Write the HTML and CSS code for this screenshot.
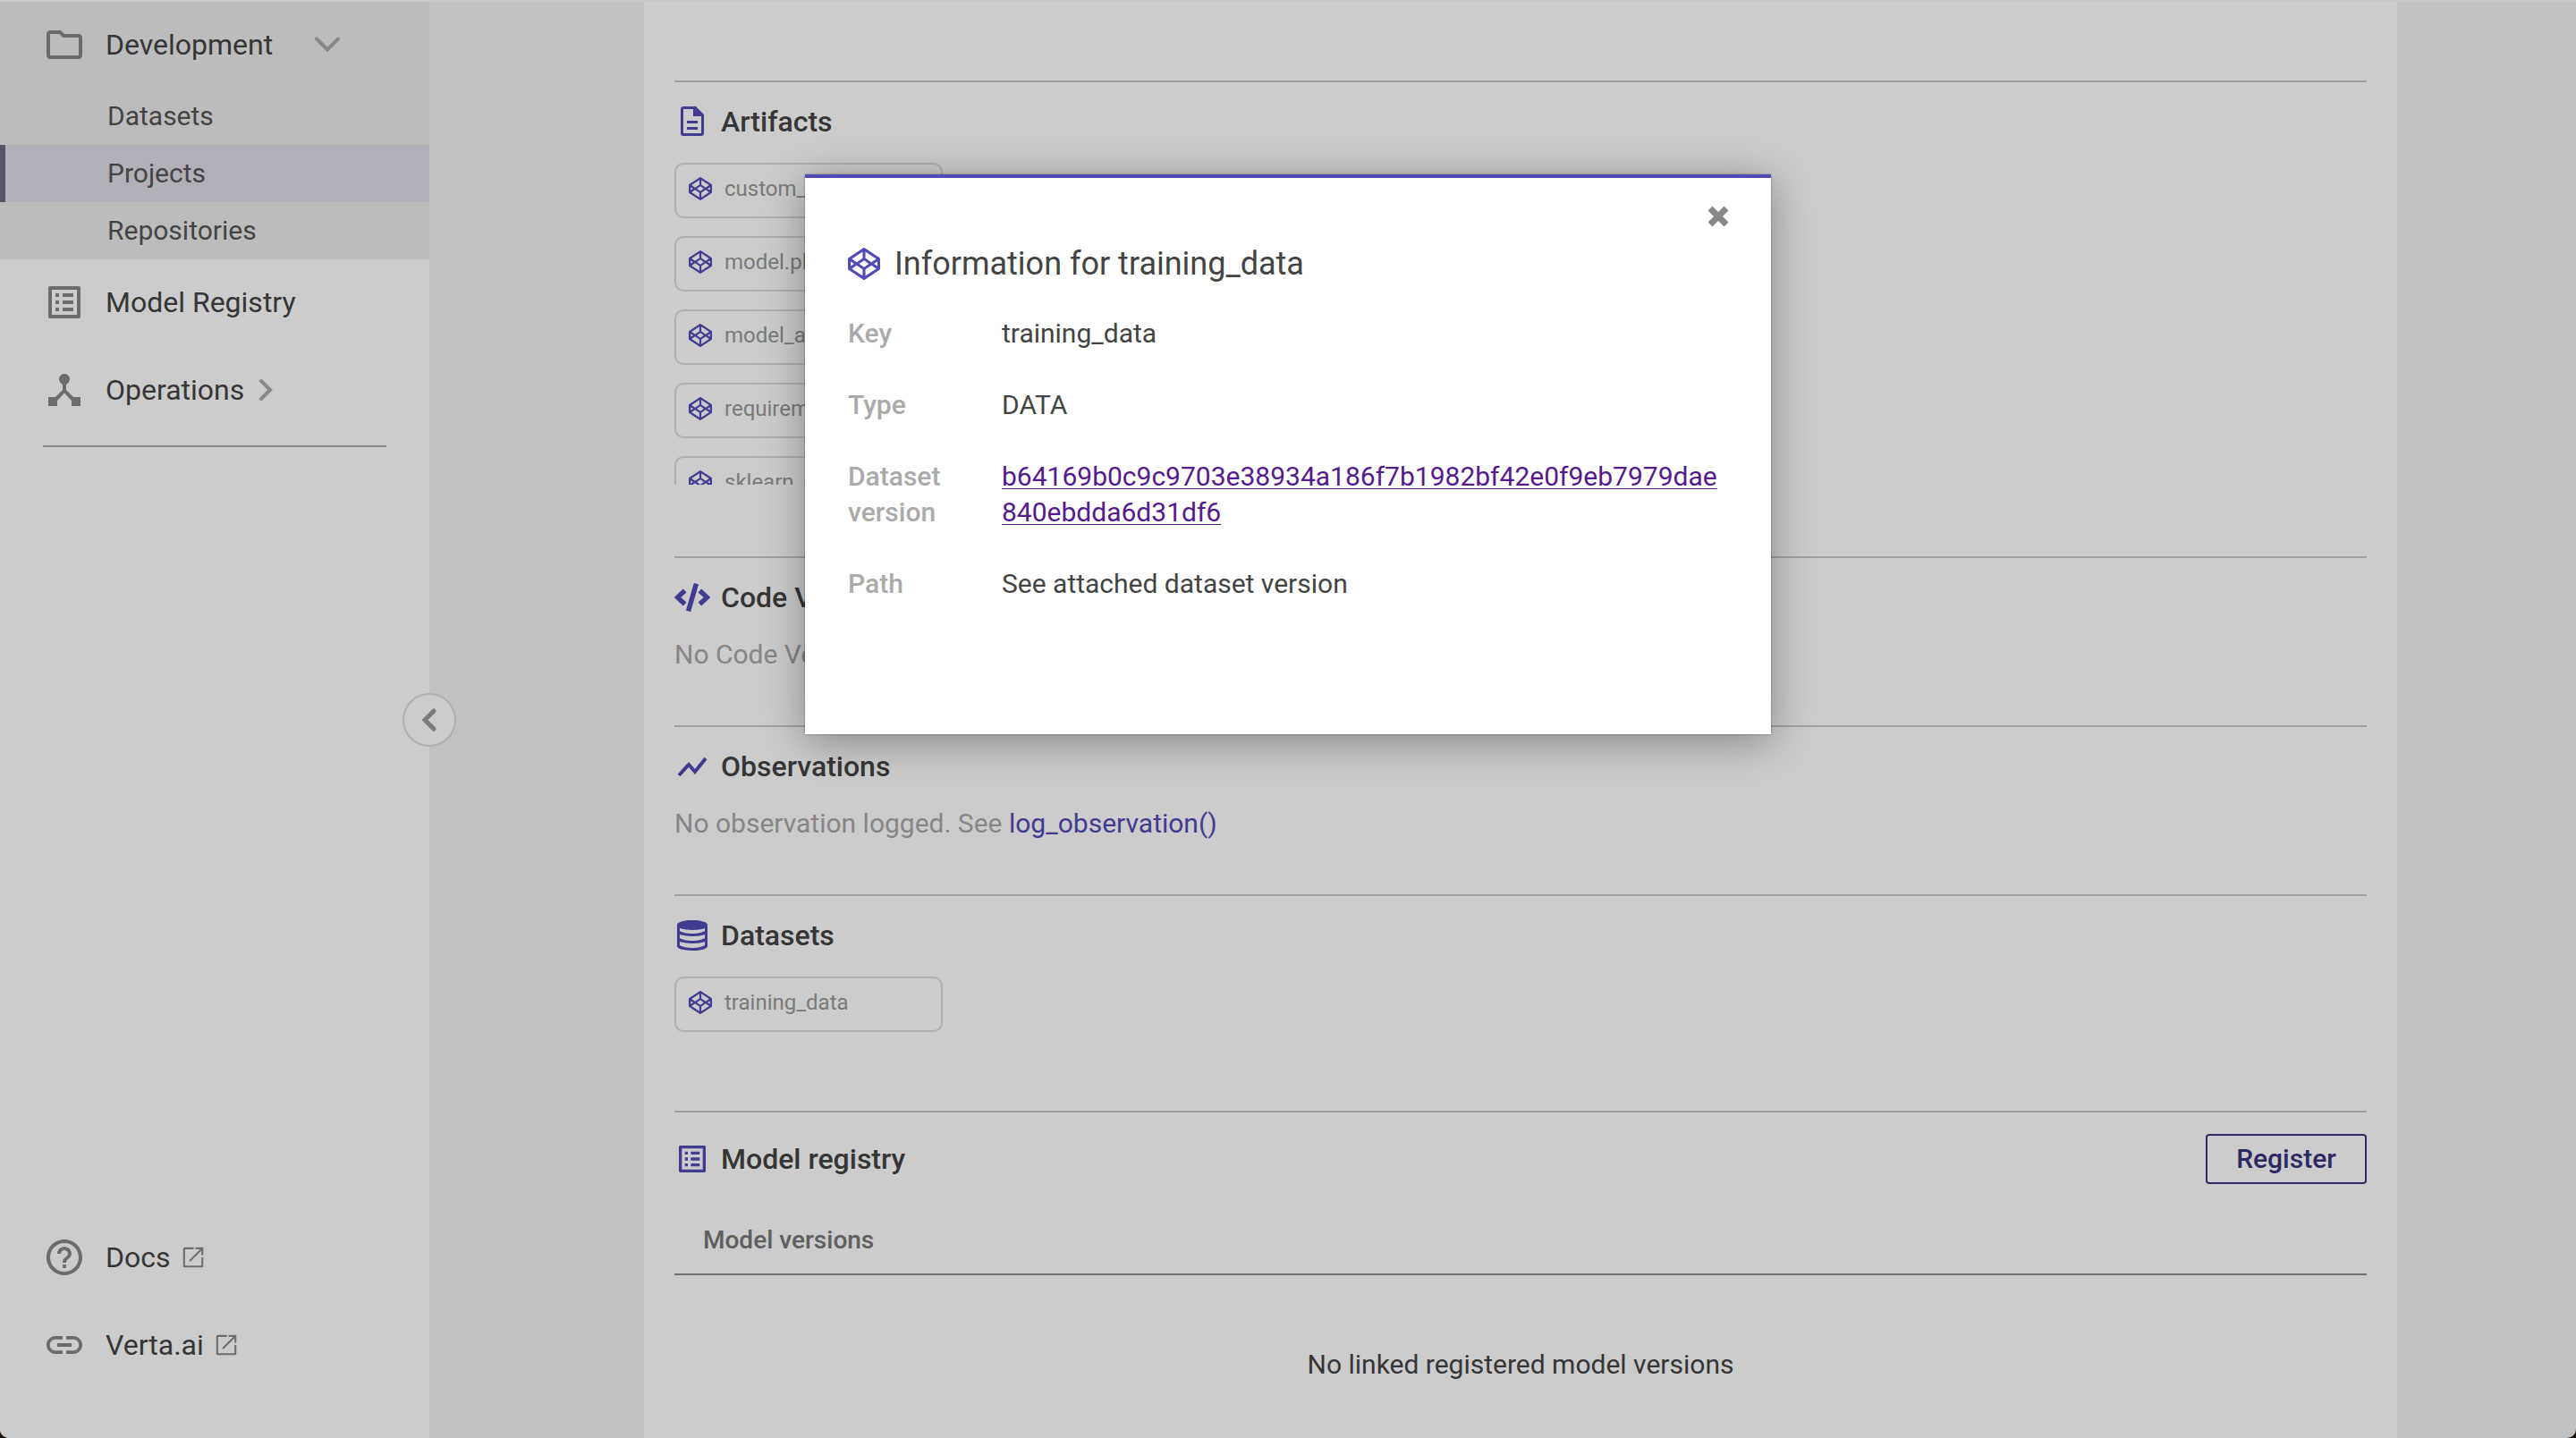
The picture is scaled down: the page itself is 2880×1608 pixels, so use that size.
FILE: index.html
```html
<!DOCTYPE html>
<html lang="en">
<head>
<meta charset="utf-8">
<title>Verta – Experiment run</title>
<link rel="stylesheet" href="styles.css">
</head>
<body>
<svg class="sprite" aria-hidden="true">
  <symbol id="i-codepen" viewBox="0 0 512 512"><path d="M502.285 159.704l-234-156c-7.987-4.915-16.868-4.996-24.571 0l-234 156C3.714 163.703 0 170.847 0 177.989v155.999c0 7.143 3.714 14.286 9.715 18.286l234 156.022c7.987 4.915 16.868 4.996 24.571 0l234-156.022c6-3.999 9.715-11.143 9.715-18.286V177.989c-.001-7.142-3.715-14.286-9.716-18.285zM278 63.131l172.286 114.858-76.857 51.429L278 165.703V63.131zm-44 0v102.572l-95.429 63.715-76.857-51.429L234 63.131zM44 219.132l55.143 36.857L44 292.846v-73.714zm190 229.715L61.714 333.989l76.857-51.429L234 346.275v102.572zm22-140.858l-77.715-52 77.715-52 77.715 52-77.715 52zm22 140.858V346.275l95.429-63.715 76.857 51.429L278 448.847zm190-156.001l-55.143-36.857L468 219.132v73.714z"/></symbol>
  <symbol id="i-list" viewBox="0 0 24 24"><path d="M11 7h6v2h-6zm0 4h6v2h-6zm0 4h6v2h-6zM7 7h2v2H7zm0 4h2v2H7zm0 4h2v2H7zM20.100 3H3.900c-.5 0-.9.4-.9.900v16.200c0 .4.400.900.9.900h16.200c.4 0 .9-.5.9-.9V3.900c0-.5-.5-.9-.9-.9zM19 19H5V5h14v14z"/></symbol>
  <symbol id="i-open" viewBox="0 0 24 24"><path d="M12.500 3H4.500C3.700 3 3 3.700 3 4.500v15c0 .8.700 1.500 1.500 1.500h15c.8 0 1.500-.7 1.500-1.500V12h-1.700v7.300H4.700V4.700h7.800zM14 3v1.700h4.100l-9.800 9.800 1.200 1.200 9.800-9.800V10H21V3z"/></symbol>
</svg>

<div class="app">
  <nav class="sidebar" aria-label="Main">
    <div class="group">
      <a class="item" href="#development">
        <svg class="item-icon" viewBox="0 0 24 24"><path d="M9.170 6l2 2H20v10H4V6h5.170M10 4H4c-1.100 0-2 .9-2 2v12c0 1.100.9 2 2 2h16c1.100 0 2-.9 2-2V8c0-1.100-.9-2-2-2h-8l-2-2z"/></svg>
        <span class="item-wide">Development</span>
        <svg class="chevron" viewBox="0 0 32 32"><path d="M4 9.500l12 12 12-12"/></svg>
      </a>
      <div class="sub">
        <a class="sub-item" href="#datasets">Datasets</a>
        <a class="sub-item active" href="#projects">Projects</a>
        <a class="sub-item" href="#repositories">Repositories</a>
      </div>
    </div>
    <div class="items">
      <a class="item" href="#registry">
        <svg class="item-icon"><use href="#i-list"/></svg>
        <span>Model Registry</span>
      </a>
      <a class="item" href="#operations">
        <svg class="item-icon" viewBox="0 0 24 24"><path d="M17 16l-4-4V8.820C14.160 8.400 15 7.300 15 6c0-1.660-1.340-3-3-3S9 4.340 9 6c0 1.300.84 2.400 2 2.820V12l-4 4H3v5h5v-3.050l4-4.200 4 4.200V21h5v-5h-4z"/></svg>
        <span>Operations</span>
        <svg class="chevron" viewBox="0 0 32 32"><path d="M7 6l10 10L7 26"/></svg>
      </a>
    </div>
    <hr class="nav-rule">
    <div class="items foot">
      <a class="item" href="#docs">
        <svg class="item-icon" viewBox="0 0 24 24"><path d="M11 18h2v-2h-2v2zm1-16C6.480 2 2 6.480 2 12s4.480 10 10 10 10-4.480 10-10S17.520 2 12 2zm0 18c-4.410 0-8-3.590-8-8s3.590-8 8-8 8 3.590 8 8-3.590 8-8 8zm0-14c-2.210 0-4 1.790-4 4h2c0-1.100.9-2 2-2s2 .9 2 2c0 2-3 1.750-3 5h2c0-2.250 3-2.500 3-5 0-2.210-1.790-4-4-4z"/></svg>
        <span>Docs</span>
        <svg class="open-icon"><use href="#i-open"/></svg>
      </a>
      <a class="item" href="#verta">
        <svg class="item-icon" viewBox="0 0 24 24"><path d="M3.900 12c0-1.710 1.390-3.100 3.100-3.100h4V7H7c-2.760 0-5 2.240-5 5s2.240 5 5 5h4v-1.900H7c-1.710 0-3.100-1.390-3.100-3.100zM8 13h8v-2H8v2zm9-6h-4v1.900h4c1.710 0 3.100 1.390 3.100 3.100s-1.390 3.100-3.100 3.100h-4V17h4c2.760 0 5-2.240 5-5s-2.240-5-5-5z"/></svg>
        <span>Verta.ai</span>
        <svg class="open-icon"><use href="#i-open"/></svg>
      </a>
    </div>
    <button class="collapse" type="button" aria-label="Collapse menu">
      <svg class="collapse-icon" viewBox="0 0 32 32"><path d="M21 6L11 16l10 10"/></svg>
    </button>
  </nav>

  <main class="main">
    <div class="panel">
      <section class="section">
        <h2 class="heading">
          <svg class="heading-icon" viewBox="0 0 40 40"><path fill-rule="evenodd" d="M10 3h14l9 9v21a3 3 0 0 1-3 3H10a3 3 0 0 1-3-3V6a3 3 0 0 1 3-3zm0 3v27h20V14h-9V6zM14 19h12v3H14zM14 26h12v3H14z"/></svg>
          <span>Artifacts</span>
        </h2>
        <div class="chips clipped">
          <button class="chip" type="button"><svg class="chip-icon"><use href="#i-codepen"/></svg><span>custom_modules</span></button>
          <button class="chip" type="button"><svg class="chip-icon"><use href="#i-codepen"/></svg><span>model.pkl</span></button>
          <button class="chip" type="button"><svg class="chip-icon"><use href="#i-codepen"/></svg><span>model_api.json</span></button>
          <button class="chip" type="button"><svg class="chip-icon"><use href="#i-codepen"/></svg><span>requirements.txt</span></button>
          <button class="chip" type="button"><svg class="chip-icon"><use href="#i-codepen"/></svg><span>sklearn_model</span></button>
        </div>
      </section>
      <section class="section">
        <h2 class="heading">
          <svg class="heading-icon" viewBox="0 0 640 512"><path d="M278.900 511.500l-61-17.700c-6.400-1.800-10-8.500-8.200-14.900L346.200 8.700c1.800-6.400 8.500-10 14.900-8.200l61 17.700c6.400 1.800 10 8.500 8.200 14.900L293.800 503.300c-1.900 6.400-8.500 10.100-14.900 8.200zm-114-112.200l43.500-46.400c4.600-4.900 4.300-12.700-.8-17.200L117 256l90.600-79.700c5.100-4.500 5.500-12.300.8-17.200l-43.500-46.400c-4.500-4.800-12.100-5.100-17-.5L3.800 247.200c-5.100 4.700-5.100 12.800 0 17.500l144.100 135.100c4.900 4.600 12.500 4.400 17-.5zm327.200.6l144.100-135.100c5.100-4.700 5.100-12.800 0-17.500L492.100 112.100c-4.800-4.500-12.400-4.300-17 .5L431.600 159c-4.600 4.900-4.300 12.700.8 17.200L523 256l-90.600 79.700c-5.100 4.500-5.500 12.300-.8 17.200l43.500 46.400c4.500 4.900 12.100 5.100 17 .6z"/></svg>
          <span>Code Versions</span>
        </h2>
        <p class="note">No Code Version logged</p>
      </section>
      <section class="section">
        <h2 class="heading">
          <svg class="heading-icon line" viewBox="0 0 40 40"><path d="M5 30l11-12 7 8L35 11"/></svg>
          <span>Observations</span>
        </h2>
        <p class="note">No observation logged. See <a class="note-link" href="#log">log_observation()</a></p>
      </section>
      <section class="section">
        <h2 class="heading">
          <svg class="heading-icon" viewBox="0 0 40 40"><path fill-rule="evenodd" d="M20 3c9 0 17 2 17 5v24c0 3-8 5-17 5S3 35 3 32V8c0-3 8-5 17-5zM6 12v3c3 2 8 3 14 3s11-1 14-3v-3c-3 1-8 2-14 2S9 13 6 12zM6 19v4c3 2 8 3 14 3s11-1 14-3v-4c-3 1-8 2-14 2S9 20 6 19zM6 27v4c3 2 8 3 14 3s11-1 14-3v-4c-3 1-8 2-14 2S9 28 6 27z"/></svg>
          <span>Datasets</span>
        </h2>
        <div class="chips">
          <button class="chip" type="button"><svg class="chip-icon"><use href="#i-codepen"/></svg><span>training_data</span></button>
        </div>
      </section>
      <section class="section">
        <div class="registry-head">
          <h2 class="heading">
            <svg class="heading-icon"><use href="#i-list"/></svg>
            <span>Model registry</span>
          </h2>
          <button class="register" type="button">Register</button>
        </div>
        <table class="versions">
          <thead><tr><th scope="col">Model versions</th></tr></thead>
          <tbody><tr><td>No linked registered model versions</td></tr></tbody>
        </table>
      </section>
    </div>
  </main>

  <div class="overlay">
    <div class="modal" role="dialog" aria-modal="true" aria-labelledby="modal-title">
      <button class="close" type="button" aria-label="Close">
        <svg class="close-icon" viewBox="0 0 22 22"><path d="M2 2l18 18M20 2L2 20"/></svg>
      </button>
      <h1 class="modal-title"><svg class="modal-icon"><use href="#i-codepen"/></svg><span id="modal-title">Information for training_data</span></h1>
      <dl class="info">
        <dt>Key</dt><dd>training_data</dd>
        <dt>Type</dt><dd>DATA</dd>
        <dt>Dataset version</dt><dd><a class="version-link" href="#version">b64169b0c9c9703e38934a186f7b1982bf42e0f9eb7979dae840ebdda6d31df6</a></dd>
        <dt>Path</dt><dd>See attached dataset version</dd>
      </dl>
    </div>
  </div>
</div>
</body>
</html>
```
FILE: styles.css
```css
* { box-sizing: border-box; }

body {
  margin: 0;
  background: #1c120c;
  color: #444;
  font-family: Roboto, "Liberation Sans", sans-serif;
  font-size: 30px;
  line-height: 40px;
}

button { font: inherit; cursor: pointer; }
a { color: inherit; text-decoration: none; }
svg { display: block; flex: none; fill: currentColor; }
.sprite { display: none; }

.app {
  position: relative;
  display: flex;
  min-height: 100vh;
  border-top: 2px solid #c8c8c8;
  border-radius: 0 0 10px 10px;
  background: #f3f3f3;
  overflow: hidden;
}

/* Sidebar */
.sidebar {
  position: relative;
  display: flex;
  flex-direction: column;
  flex: none;
  width: 480px;
  background: #fff;
}
.group { padding-top: 16px; background: #ebebeb; }
.item {
  display: flex;
  align-items: center;
  height: 64px;
  padding-left: 48px;
  font-size: 32px;
}
.item-icon { width: 48px; height: 48px; margin-right: 22px; color: #888; }
.item-wide { width: 220px; }
.chevron {
  width: 32px;
  height: 32px;
  margin-left: 12px;
  fill: none;
  stroke: #aaa;
  stroke-width: 4;
  stroke-linecap: round;
}
.open-icon { width: 30px; height: 30px; margin-left: 10px; color: #8a8a8a; }
.sub { margin-top: 16px; }
.sub-item {
  display: block;
  padding: 12px 0 12px 114px;
  border-left: 6px solid transparent;
  color: #555;
}
.sub-item.active { background: #dedde7; border-left-color: #6d6a83; }
.items { display: flex; flex-direction: column; gap: 34px; padding-top: 16px; }
.nav-rule {
  width: 384px;
  height: 2px;
  margin: 30px 0 0 48px;
  border: 0;
  background: #aaa;
}
.foot { margin-top: auto; padding-bottom: 72px; }
.collapse {
  position: absolute;
  top: 50%;
  right: -30px;
  width: 60px;
  height: 60px;
  margin-top: -30px;
  padding: 0;
  border: 2px solid #dcdcdc;
  border-radius: 50%;
  background: #fff;
}
.collapse-icon {
  width: 32px;
  height: 32px;
  margin: 0 auto;
  fill: none;
  stroke: #999;
  stroke-width: 5;
  stroke-linecap: round;
}

/* Main column */
.main { flex: 1; min-width: 0; padding: 0 200px 0 240px; }
.panel { min-height: 100%; padding: 88px 34px 0; background: #fff; }
.section { border-top: 2px solid #cacaca; }
.heading {
  display: flex;
  align-items: center;
  gap: 12px;
  margin: 0;
  padding: 24px 0 26px;
  font-size: 32px;
  font-weight: 500;
  line-height: 40px;
}
.heading-icon { width: 40px; height: 40px; color: #514bb7; }
.heading-icon.line { fill: none; stroke: #514bb7; stroke-width: 4; }
.note { margin: 0; padding-bottom: 61px; color: #a8a8a8; line-height: 36px; }
.note-link { color: #514bb7; }
.chips { display: flex; flex-direction: column; gap: 20px; padding-bottom: 88px; }
.clipped { height: 360px; margin-bottom: 80px; padding-bottom: 0; overflow: hidden; }
.chip {
  display: flex;
  flex: none;
  align-items: center;
  gap: 14px;
  width: 300px;
  height: 62px;
  padding: 0 14px 4px;
  border: 2px solid #dcdcdc;
  border-radius: 10px;
  background: none;
  color: #999;
  font-size: 24px;
  line-height: 32px;
}
.chip-icon { width: 26px; height: 26px; color: #514bb7; }
.registry-head { display: flex; justify-content: space-between; align-items: center; padding-top: 24px; }
.registry-head .heading { padding: 0; }
.register {
  width: 180px;
  height: 56px;
  padding: 0;
  border: 2px solid #373580;
  border-radius: 4px;
  background: none;
  color: #373580;
  font-weight: 500;
}
.versions { width: 100%; border-collapse: collapse; }
.versions th {
  padding: 43px 32px 17px;
  border-bottom: 2px solid #8b8b8b;
  color: #777;
  font-size: 28px;
  font-weight: 500;
  text-align: left;
}
.versions td { padding: 80px 0 40px; text-align: center; }

/* Dialog */
.overlay {
  position: absolute;
  inset: 0;
  display: flex;
  justify-content: center;
  align-items: flex-start;
  padding-top: 193px;
  background: rgba(0, 0, 0, .2);
}
.modal {
  position: relative;
  width: 1080px;
  min-height: 626px;
  padding: 76px 48px 48px;
  border-top: 4px solid #514bb7;
  background: #fff;
  box-shadow: 0 0 2px rgba(0, 0, 0, .4), 0 8px 44px rgba(0, 0, 0, .35);
}
.close {
  position: absolute;
  top: 32px;
  right: 48px;
  padding: 0;
  border: 0;
  background: none;
}
.close-icon { width: 22px; height: 22px; stroke: #888; stroke-width: 7; }
.modal-title {
  display: flex;
  align-items: center;
  gap: 16px;
  margin: 0 0 38px;
  font-size: 36px;
  font-weight: 400;
  line-height: 40px;
}
.modal-icon { width: 36px; height: 36px; color: #514bb7; }
.info {
  display: grid;
  grid-template-columns: 132px 1fr;
  gap: 40px;
  margin: 0;
}
.info dt { color: #aaa; font-weight: 500; }
.info dd { margin: 0; word-break: break-all; }
.version-link {
  color: #551a8b;
  text-decoration: underline 1px;
  text-underline-offset: 3px;
}
```
